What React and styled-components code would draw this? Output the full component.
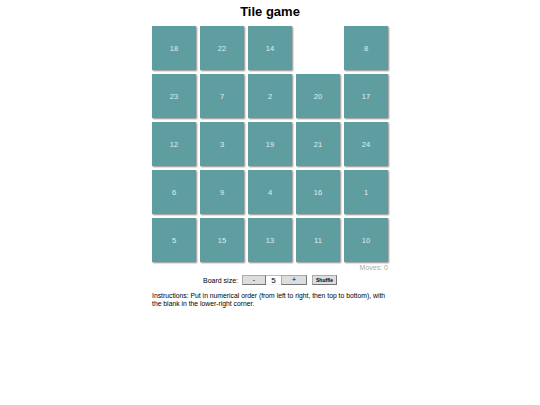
import React, { useState } from "react";
import styled, { createGlobalStyle } from "styled-components";

const Global = createGlobalStyle`
  html, body { margin: 0; padding: 0; background: #fff; }
  body { font-family: "Liberation Sans", Arial, sans-serif; }
`;

const Page = styled.div`
  width: 240px;
  margin: 0 auto;
  padding-top: 3px;
`;

const Title = styled.h1`
  margin: 0 0 4px;
  height: 17px;
  line-height: 17px;
  font-size: 13px;
  font-weight: bold;
  text-align: center;
  color: #000;
`;

const Board = styled.div`
  display: grid;
  grid-template-columns: repeat(5, 48px);
  grid-auto-rows: 48px;
`;

const Tile = styled.div`
  margin: 2px;
  width: 44px;
  height: 44px;
  display: flex;
  align-items: center;
  justify-content: center;
  font-size: 7.5px;
  color: #e4ecec;
  background: ${(p) => (p.$blank ? "transparent" : "#5f9ea0")};
  box-shadow: ${(p) => (p.$blank ? "none" : "1px 1px 1.5px rgba(0,0,0,0.45)")};
`;

const Moves = styled.div`
  text-align: right;
  font-size: 7px;
  color: #aaa;
  padding-right: 2px;
  line-height: 8px;
`;

const Controls = styled.div`
  display: flex;
  justify-content: center;
  align-items: center;
  margin-top: 3px;
  font-size: 7px;
  color: #000;
`;

const Label = styled.span`
  margin-right: 4px;
`;

const Btn = styled.button`
  height: 10px;
  width: ${(p) => p.$w}px;
  margin-left: ${(p) => p.$ml || 0}px;
  padding: 0;
  border: 1px solid #777;
  border-top-color: #aaa;
  border-left-color: #aaa;
  background: #ddd;
  font-family: "Liberation Sans", Arial, sans-serif;
  font-size: ${(p) => (p.$bold ? "5px" : "7px")};
  font-weight: ${(p) => (p.$bold ? "bold" : "normal")};
  line-height: 8px;
  color: #000;
  display: flex;
  align-items: center;
  justify-content: center;
`;

const SizeBox = styled.span`
  width: 15px;
  height: 10px;
  box-sizing: border-box;
  border-top: 1px solid #bbb;
  border-bottom: 1px solid #eee;
  display: flex;
  align-items: center;
  justify-content: center;
  background: #fff;
  font-size: 8px;
`;

const Instructions = styled.p`
  margin: 7px 2px 0;
  font-size: 6.8px;
  line-height: 8px;
  color: #000;
`;

const tiles = [18, 22, 14, 0, 8, 23, 7, 2, 20, 17, 12, 3, 19, 21, 24, 6, 9, 4, 16, 1, 5, 15, 13, 11, 10];

export default function App() {
  const [size] = useState(5);
  return (
    <>
      <Global />
      <Page>
        <Title>Tile game</Title>
        <Board>
          {tiles.map((n, i) => (
            <Tile key={i} $blank={n === 0}>{n === 0 ? "" : n}</Tile>
          ))}
        </Board>
        <Moves>Moves: 0</Moves>
        <Controls>
          <Label>Board size:</Label>
          <Btn $w={24}>-</Btn>
          <SizeBox>{size}</SizeBox>
          <Btn $w={26}>+</Btn>
          <Btn $w={25} $ml={5} $bold>Shuffle</Btn>
        </Controls>
        <Instructions>
          Instructions: Put in numerical order (from left to right, then top to bottom), with the blank in the lower-right corner.
        </Instructions>
      </Page>
    </>
  );
}
